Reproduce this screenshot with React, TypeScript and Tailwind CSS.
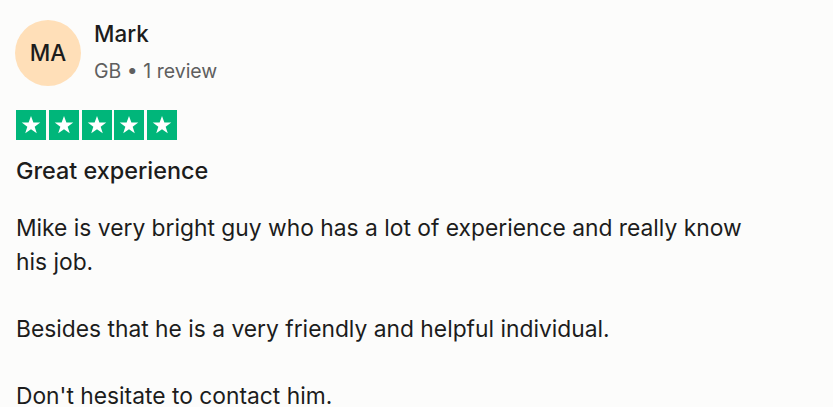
import React from "react";

function Star() {
  return (
    <div className="flex h-[30px] w-[30px] items-center justify-center bg-[#00b67a]">
      <svg viewBox="0 0 24 24" className="h-[22px] w-[22px]" fill="#ffffff">
        <path d="M12 2.2l2.6 7.1h7.5l-6.1 4.5 2.3 7.2L12 16.6 5.7 21l2.3-7.2-6.1-4.5h7.5z" />
      </svg>
    </div>
  );
}

export default function App() {
  return (
    <div
      className="min-h-[407px] w-full bg-[#fcfcfb] pl-[15px] pt-5 text-[#1c1c1c]"
      style={{ fontFamily: "Inter, 'Noto Sans', sans-serif" }}
    >
      <div className="flex items-start gap-[13px]">
        <div className="flex h-[66px] w-[66px] shrink-0 items-center justify-center rounded-full bg-[#ffdfb8] text-[22.5px] font-medium text-[#1c1c1c]">
          MA
        </div>
        <div className="flex flex-col">
          <div className="text-[22.4px] font-medium leading-[28px]">Mark</div>
          <div className="mt-[10.5px] text-[19.5px] leading-[24px] text-[#5f5f5f]">GB • 1 review</div>
        </div>
      </div>
      <div className="ml-[1px] mt-[24px] flex gap-[2.75px]">
        <Star />
        <Star />
        <Star />
        <Star />
        <Star />
      </div>
      <div className="ml-[1px] mt-[17px] text-[23.4px] font-medium leading-[28px]">Great experience</div>
      <div className="ml-[1px] mt-[26px] max-w-[745px] text-[22.8px] leading-[33.5px]">
        <p>Mike is very bright guy who has a lot of experience and really know his job.</p>
        <p className="mt-[33.5px]">Besides that he is a very friendly and helpful individual.</p>
        <p className="mt-[33.5px]">Don't hesitate to contact him.</p>
      </div>
    </div>
  );
}
